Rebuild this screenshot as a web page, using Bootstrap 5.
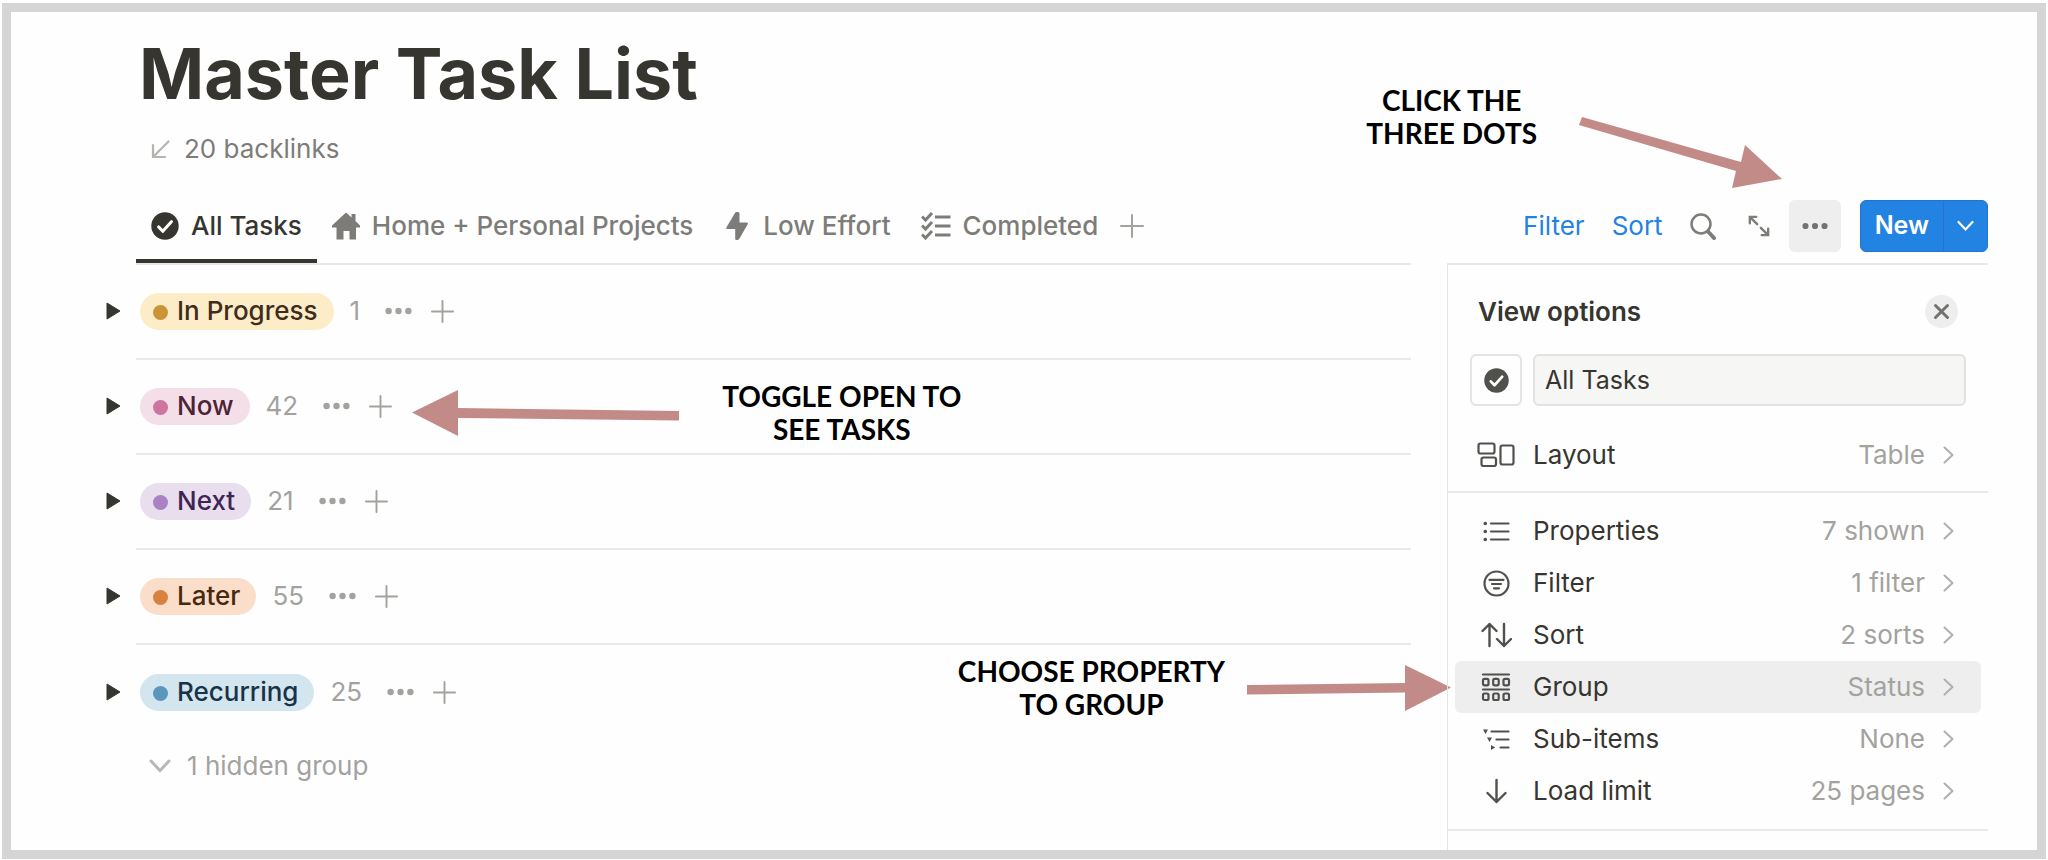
<!DOCTYPE html>
<html lang="en">
<head>
<meta charset="utf-8">
<meta name="viewport" content="width=device-width, initial-scale=1">
<title>Master Task List</title>
<link href="https://cdn.jsdelivr.net/npm/bootstrap@5.3.0/dist/css/bootstrap.min.css" rel="stylesheet">
<style>
  :root { --ink: #37352f; --soft: #7d7c78; --faint: #a3a29e; --line: #e9e9e8; --arrow: #c28b88; }
  body { font-family: Inter, "Liberation Sans", sans-serif; font-size: 26px; line-height: 32px; color: var(--ink); background: #fff; }
  svg { display: block; flex: none; }
  button { font: inherit; }
  .page-frame { margin: 3px 2px 1px; min-height: calc(100vh - 4px); border: 9px solid #d5d5d5; background: #fefefe; padding: 0 49px 0 125px; gap: 36px; }
  .main-col { min-width: 0; }
  .side-col { width: 541px; }
  .plain-btn { background: none; border: 0; padding: 0; color: inherit; display: inline-flex; align-items: center; }
  .page-title { font-size: 70px; line-height: 88px; font-weight: 700; margin: 18px 0 15px; padding-left: 3px; white-space: nowrap; }
  .backlinks { color: var(--soft); gap: 14px; padding-left: 15px; text-decoration: none; }
  .view-tabs { margin-top: 44px; border-bottom: 2px solid var(--line); }
  .view-tabs .nav-link { display: flex; align-items: center; gap: 12px; padding: 0 15px 17px; border-bottom: 4px solid transparent; color: var(--soft); font-weight: 500; white-space: nowrap; }
  .view-tabs .nav-link.active { color: var(--ink); border-color: var(--ink); }
  .add-view { padding: 0 7px 17px; color: var(--faint); }

  .group-row { height: 95px; border-bottom: 2px solid var(--line); position: relative; }
  .group-row:last-child { border-bottom: 0; }
  .toggle { margin-left: -30px; margin-right: 19px; }
  .status-pill { height: 37px; border-radius: 19px; padding: 0 16px 0 13px; gap: 9px; font-weight: 500; white-space: nowrap; }
  .status-dot { width: 15px; height: 15px; border-radius: 50%; margin-top: 3px; }
  .count { color: var(--faint); margin: 0 25px 0 16px; }
  .row-tools { color: var(--faint); gap: 19px; }
  .pill-yellow { background: #fdecc8; color: #402c1b; } .pill-yellow .status-dot { background: #cb9434; }
  .pill-pink { background: #f4dfe8; color: #4c2337; } .pill-pink .status-dot { background: #cd749f; }
  .pill-purple { background: #e8deee; color: #412454; } .pill-purple .status-dot { background: #a982c3; }
  .pill-orange { background: #fadec9; color: #49290e; } .pill-orange .status-dot { background: #d9823f; }
  .pill-blue { background: #d3e5ef; color: #183347; } .pill-blue .status-dot { background: #5b97bd; }
  .hidden-groups { color: var(--faint); padding-left: 13px; gap: 16px; margin-top: 10px; }

  .callout-text { font-family: Lato, "Liberation Sans", sans-serif; font-size: 28px; line-height: 33px; font-weight: 700; color: #000; text-align: center; text-transform: uppercase; white-space: nowrap; }
  .callout-now { margin-left: 20px; gap: 42px; align-self: flex-start; padding-top: 20px; }
  .callout-group { position: absolute; right: -41px; top: 10px; gap: 22px; }
  .callout-dots { position: absolute; right: 206px; top: 72px; gap: 42px; }
  .arrow-shape { fill: var(--arrow); }

  .toolbar { padding-top: 188px; padding-bottom: 11px; color: var(--soft); }
  .tool-link { color: #2383e2; text-decoration: none; margin-right: 27px; }
  .search-btn { margin-right: 32px; }
  .more-btn { width: 52px; height: 52px; justify-content: center; background: #eeeeee; border-radius: 6px; color: #73726e; margin: 0 19px; }
  .new-btn { --bs-btn-bg: #2383e2; --bs-btn-border-color: #2175ca; --bs-btn-color: #fff; height: 52px; font-size: 25px; font-weight: 600; line-height: 32px; border-radius: 6px; padding: 0 14px 2px; }
  .new-group .dropdown-toggle::after { display: none; }
  .new-group .dropdown-toggle { width: 45px; padding: 0; display: flex; align-items: center; justify-content: center; }

  .options-panel { border-top: 2px solid var(--line); border-left: 1px solid #e4e4e3; }
  .options-head { padding: 30px 30px 0; }
  .options-head h2 { font-size: 26px; line-height: 33px; font-weight: 600; margin: 0; }
  .close-btn { width: 33px; height: 33px; border-radius: 50%; background: #eeeeee; justify-content: center; color: #73726e; }
  .name-row { padding: 26px 22px 23px; gap: 11px; }
  .view-icon { width: 52px; height: 52px; border: 2px solid #e4e4e2; border-radius: 6px; justify-content: center; color: #50504c; }
  .view-name { height: 52px; font-size: 25px; color: var(--ink); background: #f6f6f5; border: 2px solid #e2e2e0; border-radius: 6px; padding: 0 10px; }
  .options-list { padding: 0 7px 10px; }
  .options-list + .options-list { border-top: 2px solid var(--line); padding-top: 12px; padding-bottom: 12px; }
  .option { height: 52px; width: 100%; padding: 0 27px 0 22px; border-radius: 6px; }
  .option .glyph { width: 38px; display: flex; justify-content: center; margin-right: 18px; color: #50504c; }
  .option .value { margin-left: auto; margin-right: 18px; color: var(--faint); }
  .option > svg { color: #b0afab; }
  .option.selected { background: #eeeeee; }
  .last-rule { border-top: 2px solid var(--line); }
</style>
</head>
<body>
<svg width="0" height="0" class="position-absolute" aria-hidden="true">
  <defs>
    <symbol id="i-check" viewBox="0 0 28 28"><circle cx="14" cy="14" r="13.7" fill="currentColor"/><path d="M7.6 14.9l4.2 4.4 8.6-9.6" fill="none" stroke="#fff" stroke-width="3" stroke-linecap="round" stroke-linejoin="round"/></symbol>
    <symbol id="i-dots" viewBox="0 0 27 8"><g fill="currentColor"><circle cx="3.6" cy="4" r="3.2"/><circle cx="13.5" cy="4" r="3.2"/><circle cx="23.4" cy="4" r="3.2"/></g></symbol>
    <symbol id="i-plus" viewBox="0 0 24 24"><path d="M12 1v22M1 12h22" fill="none" stroke="currentColor" stroke-width="2" stroke-linecap="round"/></symbol>
    <symbol id="i-tri" viewBox="0 0 15 18"><path d="M1 1l13 8-13 8z" fill="#37352f" stroke="#37352f" stroke-width="1" stroke-linejoin="round"/></symbol>
    <symbol id="i-right" viewBox="0 0 11 18"><path d="M1.5 1.5L9.5 9l-8 7.500" fill="none" stroke="currentColor" stroke-width="2" stroke-linecap="round" stroke-linejoin="round"/></symbol>
  </defs>
</svg>

<div class="page-frame d-flex">
  <main class="main-col flex-grow-1">
    <h1 class="page-title">Master Task List</h1>
    <a href="#" class="backlinks d-inline-flex align-items-center">
      <svg width="19" height="19" viewBox="0 0 19 19" fill="none" stroke="#b5b4b1" stroke-width="2.200" stroke-linecap="round"><path d="M17.500 1.500L2.500 16.500M2 5v12h12"/></svg>20 backlinks</a>

    <nav class="view-tabs d-flex align-items-start" aria-label="Views">
      <a href="#" class="nav-link active" aria-current="page"><svg width="28" height="28"><use href="#i-check"/></svg>All Tasks</a>
      <a href="#" class="nav-link"><svg width="28" height="28" viewBox="0 0 28 28" fill="currentColor"><path d="M14 .5l5.500 5V2h4v7l4.500 4.500v2H24V27.500h-6.500v-8.500h-6v8.500H4.500V15.500H0v-2z"/></svg>Home + Personal Projects</a>
      <a href="#" class="nav-link"><svg width="28" height="28" viewBox="0 0 28 28" fill="currentColor"><path d="M13.500 0h1.500q1.500 0 1.500 1.500v9h7q2.200 0 1.200 1.800L16.500 26.500Q15.500 28 14 28h-.5q-1.300 0-1.300-1.500V17H4.500q-2 0-1-1.800L12 1Q12.500 0 13.500 0z"/></svg>Low Effort</a>
      <a href="#" class="nav-link"><svg width="30" height="28" viewBox="0 0 30 28" fill="none" stroke="currentColor" stroke-width="3"><path d="M1 4.500L4.500 8 11 1M1 13.500L4.500 17 11 10M1 22.500L4.500 26 11 19"/><path d="M14 5h15.500M14 14h15.500M14 23h15.500"/></svg>Completed</a>
      <button class="plain-btn add-view" aria-label="Add view"><svg width="24" height="32"><use href="#i-plus"/></svg></button>
    </nav>

    <section aria-label="Groups">
      <div class="group-row d-flex align-items-center">
        <button class="plain-btn toggle" aria-label="Open In Progress"><svg width="15" height="18"><use href="#i-tri"/></svg></button>
        <span class="status-pill pill-yellow d-inline-flex align-items-center"><span class="status-dot"></span>In Progress</span>
        <span class="count">1</span>
        <span class="row-tools d-flex"><button class="plain-btn" aria-label="More"><svg width="27" height="8"><use href="#i-dots"/></svg></button><button class="plain-btn" aria-label="Add"><svg width="23" height="23"><use href="#i-plus"/></svg></button></span>
      </div>
      <div class="group-row d-flex align-items-center">
        <button class="plain-btn toggle" aria-label="Open Now"><svg width="15" height="18"><use href="#i-tri"/></svg></button>
        <span class="status-pill pill-pink d-inline-flex align-items-center"><span class="status-dot"></span>Now</span>
        <span class="count">42</span>
        <span class="row-tools d-flex"><button class="plain-btn" aria-label="More"><svg width="27" height="8"><use href="#i-dots"/></svg></button><button class="plain-btn" aria-label="Add"><svg width="23" height="23"><use href="#i-plus"/></svg></button></span>
        <div class="callout-now d-flex align-items-center">
          <svg class="arrow-shape" width="268" height="48" viewBox="0 0 268 48"><path d="M0 23.500L46 1v18l221 3v9.500L46 29v18z"/></svg>
          <div class="callout-text">Toggle open to<br>see tasks</div>
        </div>
      </div>
      <div class="group-row d-flex align-items-center">
        <button class="plain-btn toggle" aria-label="Open Next"><svg width="15" height="18"><use href="#i-tri"/></svg></button>
        <span class="status-pill pill-purple d-inline-flex align-items-center"><span class="status-dot"></span>Next</span>
        <span class="count">21</span>
        <span class="row-tools d-flex"><button class="plain-btn" aria-label="More"><svg width="27" height="8"><use href="#i-dots"/></svg></button><button class="plain-btn" aria-label="Add"><svg width="23" height="23"><use href="#i-plus"/></svg></button></span>
      </div>
      <div class="group-row d-flex align-items-center">
        <button class="plain-btn toggle" aria-label="Open Later"><svg width="15" height="18"><use href="#i-tri"/></svg></button>
        <span class="status-pill pill-orange d-inline-flex align-items-center"><span class="status-dot"></span>Later</span>
        <span class="count">55</span>
        <span class="row-tools d-flex"><button class="plain-btn" aria-label="More"><svg width="27" height="8"><use href="#i-dots"/></svg></button><button class="plain-btn" aria-label="Add"><svg width="23" height="23"><use href="#i-plus"/></svg></button></span>
      </div>
      <div class="group-row d-flex align-items-center">
        <button class="plain-btn toggle" aria-label="Open Recurring"><svg width="15" height="18"><use href="#i-tri"/></svg></button>
        <span class="status-pill pill-blue d-inline-flex align-items-center"><span class="status-dot"></span>Recurring</span>
        <span class="count">25</span>
        <span class="row-tools d-flex"><button class="plain-btn" aria-label="More"><svg width="27" height="8"><use href="#i-dots"/></svg></button><button class="plain-btn" aria-label="Add"><svg width="23" height="23"><use href="#i-plus"/></svg></button></span>
        <div class="callout-group d-flex align-items-center">
          <div class="callout-text">Choose property<br>to group</div>
          <svg class="arrow-shape" width="205" height="48" viewBox="0 0 205 48"><path d="M204 23.500L158 1v18L0 21v9.500L158 28.500V47z"/></svg>
        </div>
      </div>
    </section>
    <button class="plain-btn hidden-groups"><svg width="22" height="14" viewBox="0 0 22 14" fill="none" stroke="#b8b7b4" stroke-width="3" stroke-linecap="round"><path d="M2 2l9 9.500L20 2"/></svg>1 hidden group</button>
  </main>

  <aside class="side-col flex-shrink-0 d-flex flex-column position-relative">
    <div class="callout-dots d-flex">
      <div class="callout-text">Click the<br>three dots</div>
      <svg class="arrow-shape mt-4 pt-2" width="203" height="81" viewBox="0 0 203 73"><path d="M3 1l159 45 4-17 37 34-50 9 4-17L0 9z"/></svg>
    </div>
    <div class="toolbar d-flex align-items-center justify-content-end">
      <a href="#" class="tool-link">Filter</a>
      <a href="#" class="tool-link">Sort</a>
      <button class="plain-btn search-btn" aria-label="Search"><svg width="26" height="27" viewBox="0 0 26 27" fill="none" stroke="currentColor" stroke-linecap="round"><circle cx="11" cy="11" r="9.500" stroke-width="2.500"/><path d="M18 18.500l6 6.500" stroke-width="4"/></svg></button>
      <button class="plain-btn" aria-label="Expand"><svg width="22" height="22" viewBox="0 0 24 24" fill="none" stroke="currentColor" stroke-width="2.600" stroke-linecap="round"><path d="M2 9V2h7M2.500 2.500L10 10M14 14l7.500 7.500M22 15v7h-7"/></svg></button>
      <button class="plain-btn more-btn" aria-label="View options"><svg width="26" height="8"><use href="#i-dots"/></svg></button>
      <div class="btn-group new-group">
        <button class="btn new-btn">New</button>
        <button class="btn new-btn dropdown-toggle" data-bs-toggle="dropdown" aria-label="New from template"><svg width="17" height="12" viewBox="0 0 17 12" fill="none" stroke="#fff" stroke-width="2.200" stroke-linecap="round"><path d="M1.500 2l7 7.500 7-7.500"/></svg></button>
      </div>
    </div>

    <div class="options-panel flex-grow-1">
      <div class="options-head d-flex justify-content-between align-items-center">
        <h2>View options</h2>
        <button class="plain-btn close-btn" aria-label="Close"><svg width="17" height="17" viewBox="0 0 17 17" fill="none" stroke="currentColor" stroke-width="3" stroke-linecap="round"><path d="M2.500 2.500l12 12M14.500 2.500l-12 12"/></svg></button>
      </div>
      <div class="name-row d-flex">
        <button class="plain-btn view-icon flex-shrink-0" aria-label="View icon"><svg width="25" height="25"><use href="#i-check"/></svg></button>
        <input class="form-control view-name" type="text" value="All Tasks" aria-label="View name">
      </div>
      <div class="options-list">
        <button class="plain-btn option"><span class="glyph"><svg width="38" height="26" viewBox="0 0 38 26" fill="none" stroke="currentColor" stroke-width="2.200"><rect x="1.500" y="1.500" width="16" height="10" rx="2"/><rect x="4.500" y="15.500" width="14.500" height="8.500" rx="2"/><rect x="23.500" y="3.500" width="13" height="19" rx="2"/></svg></span>Layout<span class="value">Table</span><svg width="11" height="18"><use href="#i-right"/></svg></button>
      </div>
      <div class="options-list">
        <button class="plain-btn option"><span class="glyph"><svg width="27" height="21" viewBox="0 0 27 21" fill="none" stroke="currentColor" stroke-width="2.200" stroke-linecap="round"><path d="M8 2.500h17.500M8 10.500h17.500M8 18.500h17.500"/><path d="M2.200 2.500h.1M2.200 10.500h.1M2.200 18.500h.1" stroke-width="3.600"/></svg></span>Properties<span class="value">7 shown</span><svg width="11" height="18"><use href="#i-right"/></svg></button>
        <button class="plain-btn option"><span class="glyph"><svg width="27" height="27" viewBox="0 0 27 27" fill="none" stroke="currentColor" stroke-width="2.200" stroke-linecap="round"><circle cx="13.500" cy="13.500" r="12"/><path d="M6.500 9.800h14M9 14h9M11 18.300h5"/></svg></span>Filter<span class="value">1 filter</span><svg width="11" height="18"><use href="#i-right"/></svg></button>
        <button class="plain-btn option"><span class="glyph"><svg width="31" height="26" viewBox="0 0 31 26" fill="none" stroke="currentColor" stroke-width="2.400" stroke-linecap="round" stroke-linejoin="round"><path d="M8.500 24V2M1.500 9l7-7 7 7M23 2v22M16 17l7 7 7-7"/></svg></span>Sort<span class="value">2 sorts</span><svg width="11" height="18"><use href="#i-right"/></svg></button>
        <button class="plain-btn option selected"><span class="glyph"><svg width="30" height="30" viewBox="0 0 30 30" fill="none" stroke="currentColor" stroke-width="2.200" stroke-linecap="round"><path d="M2 2.500h26M2 17.500h26"/><rect x="2" y="6.800" width="5.500" height="6.500" rx="1.500"/><rect x="12.200" y="6.800" width="5.500" height="6.500" rx="1.500"/><rect x="22.500" y="6.800" width="5.500" height="6.500" rx="1.500"/><rect x="2" y="21.500" width="5.500" height="6.500" rx="1.500"/><rect x="12.200" y="21.500" width="5.500" height="6.500" rx="1.500"/><rect x="22.500" y="21.500" width="5.500" height="6.500" rx="1.500"/></svg></span>Group<span class="value">Status</span><svg width="11" height="18"><use href="#i-right"/></svg></button>
        <button class="plain-btn option"><span class="glyph"><svg width="27" height="21" viewBox="0 0 27 21" stroke="currentColor" stroke-width="2.200" stroke-linecap="round"><path d="M8.500 2.500h17M13.500 10.500h12M17.500 18.500h8"/><path d="M0 .5h5L2.500 5zM4 8.500h5L6.500 13zM8 16v5l4.200-2.500z" fill="currentColor" stroke="none"/></svg></span>Sub-items<span class="value">None</span><svg width="11" height="18"><use href="#i-right"/></svg></button>
        <button class="plain-btn option"><span class="glyph"><svg width="21" height="26" viewBox="0 0 21 26" fill="none" stroke="currentColor" stroke-width="2.400" stroke-linecap="round" stroke-linejoin="round"><path d="M10.500 2v22M1.500 15l9 9 9-9"/></svg></span>Load limit<span class="value">25 pages</span><svg width="11" height="18"><use href="#i-right"/></svg></button>
      </div>
      <div class="last-rule"></div>
    </div>
  </aside>
</div>
<script src="https://cdn.jsdelivr.net/npm/bootstrap@5.3.0/dist/js/bootstrap.bundle.min.js"></script>
</body>
</html>
